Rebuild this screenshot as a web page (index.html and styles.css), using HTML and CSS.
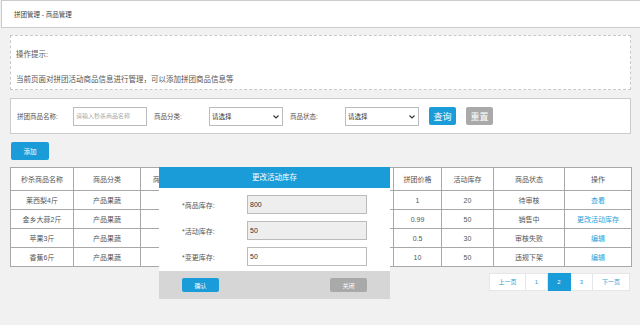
FILE: index.html
```html
<!DOCTYPE html>
<html lang="zh-CN">
<head>
<meta charset="UTF-8" />
<title>拼团商品管理</title>
<link rel="stylesheet" href="styles.css">
</head>
<body>
<div class="crumb">拼团管理 - 商品管理</div>

<div class="page">
    <!-- 操作提示 -->
    <div class="tips">
        <p>操作提示:</p>
        <p>当前页面对拼团活动商品信息进行管理，可以添加拼团商品信息等</p>
    </div>

    <!-- 搜索条件 -->
    <form class="search">
        <label class="lbl">拼团商品名称:</label>
        <input class="txt" type="text" placeholder="请输入秒杀商品名称">
        <label class="lbl lbl-gap">商品分类:</label>
        <span class="sel-wrap">
            <select class="sel"><option>请选择</option></select>
            <svg class="chev" width="6" height="4" viewBox="0 0 6 4"><path d="M0.5 0.5 L3 3 L5.5 0.5" fill="none" stroke="#333" stroke-width="1.1"/></svg>
        </span>
        <label class="lbl lbl-gap">商品状态:</label>
        <span class="sel-wrap">
            <select class="sel"><option>请选择</option></select>
            <svg class="chev" width="6" height="4" viewBox="0 0 6 4"><path d="M0.5 0.5 L3 3 L5.5 0.5" fill="none" stroke="#333" stroke-width="1.1"/></svg>
        </span>
        <button type="button" class="btn btn-blue btn-query">查询</button>
        <button type="button" class="btn btn-gray btn-reset">重置</button>
    </form>

    <button type="button" class="btn btn-blue btn-add">添加</button>

    <table class="grid">
        <colgroup>
            <col style="width:63px"><col style="width:67px"><col style="width:64px"><col style="width:95px"><col style="width:94px">
            <col style="width:48px"><col style="width:52px"><col style="width:71px"><col style="width:67px">
        </colgroup>
        <thead>
            <tr><th>秒杀商品名称</th><th>商品分类</th><th>商品原价(元)</th><th></th><th></th><th>拼团价格</th><th>活动库存</th><th>商品状态</th><th>操作</th></tr>
        </thead>
        <tbody>
            <tr><td>莱西梨4斤</td><td>产品果蔬</td><td></td><td></td><td></td><td>1</td><td>20</td><td>待审核</td><td><a href="#">查看</a></td></tr>
            <tr><td>金乡大蒜2斤</td><td>产品果蔬</td><td>1288.00</td><td></td><td></td><td>0.99</td><td>50</td><td>销售中</td><td><a href="#">更改活动库存</a></td></tr>
            <tr><td>苹果3斤</td><td>产品果蔬</td><td></td><td></td><td></td><td>0.5</td><td>30</td><td>审核失败</td><td><a href="#">编辑</a></td></tr>
            <tr><td>香蕉6斤</td><td>产品果蔬</td><td></td><td></td><td></td><td>10</td><td>50</td><td>违规下架</td><td><a href="#">编辑</a></td></tr>
        </tbody>
    </table>

    <div class="pager">
        <a href="#" class="pg pg-wide">上一页</a>
        <a href="#" class="pg">1</a>
        <a href="#" class="pg active">2</a>
        <a href="#" class="pg">3</a>
        <a href="#" class="pg pg-wide">下一页</a>
    </div>
</div>

<!-- 更改活动库存 弹窗 -->
<div class="modal">
    <div class="modal-head">更改活动库存</div>
    <div class="modal-body">
        <div class="field"><span class="f-lbl">*商品库存:</span><input class="f-input" type="text" value="800" readonly></div>
        <div class="field"><span class="f-lbl">*活动库存:</span><input class="f-input" type="text" value="50" readonly></div>
        <div class="field"><span class="f-lbl">*变更库存:</span><input class="f-input edit" type="text" value="50"></div>
    </div>
    <div class="modal-foot">
        <button type="button" class="btn btn-blue m-btn">确认</button>
        <button type="button" class="btn btn-gray m-btn">关闭</button>
    </div>
</div>
</body>
</html>
```

FILE: styles.css
```css
body, html {
    margin: 0;
    padding: 0;
    background: #f1f1f1;
    font-family: "Liberation Sans", "Noto Sans CJK SC", sans-serif;
    color: #555;
}

/* 面包屑 */
.crumb {
    height: 26px;
    line-height: 28px;
    margin-left: 1px;
    padding-left: 12px;
    background: #fff;
    border-top: 1px solid #ccc;
    border-bottom: 1px solid #ccc;
    border-left: 1px solid #ccc;
    font-size: 6.5px;
    color: #444;
}

.page {
    padding: 7px 9px 0 10px;
    position: relative;
}

.tips {
    height: 53px;
    background: #fff;
    border: 1px dashed #c8c8c8;
    padding-left: 5px;
    font-size: 7.5px;
    color: #555;
}

.tips p {
    margin: 0;
}

.tips p:first-child {
    margin-top: 12px;
}

.tips p:last-child {
    margin-top: 14px;
}

.search {
    margin: 8px 0 0 0;
    height: 34px;
    background: #fff;
    border: 1px solid #ccc;
    display: flex;
    align-items: center;
    padding-left: 6px;
    font-size: 6.5px;
}

.lbl {
    color: #555;
    width: 56px;
}

.lbl-gap {
    margin-left: 7px;
    width: 55px;
}

.txt {
    box-sizing: border-box;
    width: 74px;
    height: 19px;
    border: 1px solid #bbb;
    padding: 0 0 0 2px;
    font-size: 6px;
    font-family: inherit;
    margin: 0;
}

.txt::placeholder {
    color: #aaa;
}

.sel-wrap {
    position: relative;
    display: block;
}

.sel {
    -webkit-appearance: none;
    appearance: none;
    box-sizing: border-box;
    width: 74px;
    height: 19px;
    border: 1px solid #bbb;
    background: #fff;
    padding: 0 0 0 2px;
    font-size: 6.5px;
    font-family: inherit;
    color: #333;
    margin: 0;
    display: block;
}

.chev {
    position: absolute;
    right: 4px;
    top: 8px;
}

.btn {
    border: none;
    border-radius: 2px;
    color: #fff;
    font-family: inherit;
    padding: 0;
    cursor: pointer;
}

.btn-blue {
    background: #1a9cd8;
}

.btn-gray {
    background: #a9a9a9;
}

.btn-query, .btn-reset {
    width: 27px;
    height: 18px;
    font-size: 9px;
    margin-left: 10px;
}

.btn-add {
    display: block;
    margin: 8px 0 0 1px;
    width: 38px;
    height: 18px;
    font-size: 6.5px;
}

.grid {
    margin-top: 7px;
    width: 621px;
    border-collapse: collapse;
    table-layout: fixed;
    background: #fff;
    font-size: 7px;
}

.grid th, .grid td {
    border: 1px solid #a8a8a8;
    text-align: center;
    font-weight: normal;
    color: #555;
    padding: 0;
    white-space: nowrap;
    overflow: hidden;
}

.grid th {
    height: 22px;
}

.grid td {
    height: 18px;
}

.grid a {
    color: #2a9fd8;
    text-decoration: none;
}

.pager {
    display: flex;
    justify-content: flex-end;
    margin: 6px 1px 0 0;
}

.pg {
    box-sizing: border-box;
    height: 18px;
    line-height: 16px;
    width: 22px;
    text-align: center;
    background: #fff;
    border: 1px solid #e6e6e6;
    border-left: none;
    font-size: 6px;
    color: #2a9fd8;
    text-decoration: none;
}

.pg:first-child {
    border-left: 1px solid #e6e6e6;
}

.pg-wide {
    width: 37px;
}

.pg.active {
    width: 23px;
    background: #1a9cd8;
    color: #fff;
    border-color: #1a9cd8;
}

/* 弹窗 */
.modal {
    position: absolute;
    left: 159px;
    top: 167px;
    width: 231px;
    background: #fff;
}

.modal-head {
    height: 21px;
    line-height: 21px;
    background: #1a9cd8;
    color: #fff;
    text-align: center;
    font-size: 7.5px;
}

.modal-body {
    height: 76px;
    padding: 7px 0 0 23px;
    display: flex;
    flex-direction: column;
    gap: 7px;
}

.field {
    display: flex;
    align-items: center;
}

.f-lbl {
    width: 65px;
    font-size: 7px;
    color: #555;
}

.f-input {
    box-sizing: border-box;
    width: 120px;
    height: 19px;
    border: 1px solid #bbb;
    background: #eee;
    font-size: 7px;
    font-family: inherit;
    color: #333;
    padding: 0 0 0 2px;
    margin: 0;
}

.f-input.edit {
    background: #fff;
}

.modal-foot {
    height: 28px;
    background: #d6d6d6;
    display: flex;
    justify-content: space-between;
    align-items: center;
    padding: 0 23px;
}

.m-btn {
    width: 37px;
    height: 14px;
    font-size: 6px;
}
```
